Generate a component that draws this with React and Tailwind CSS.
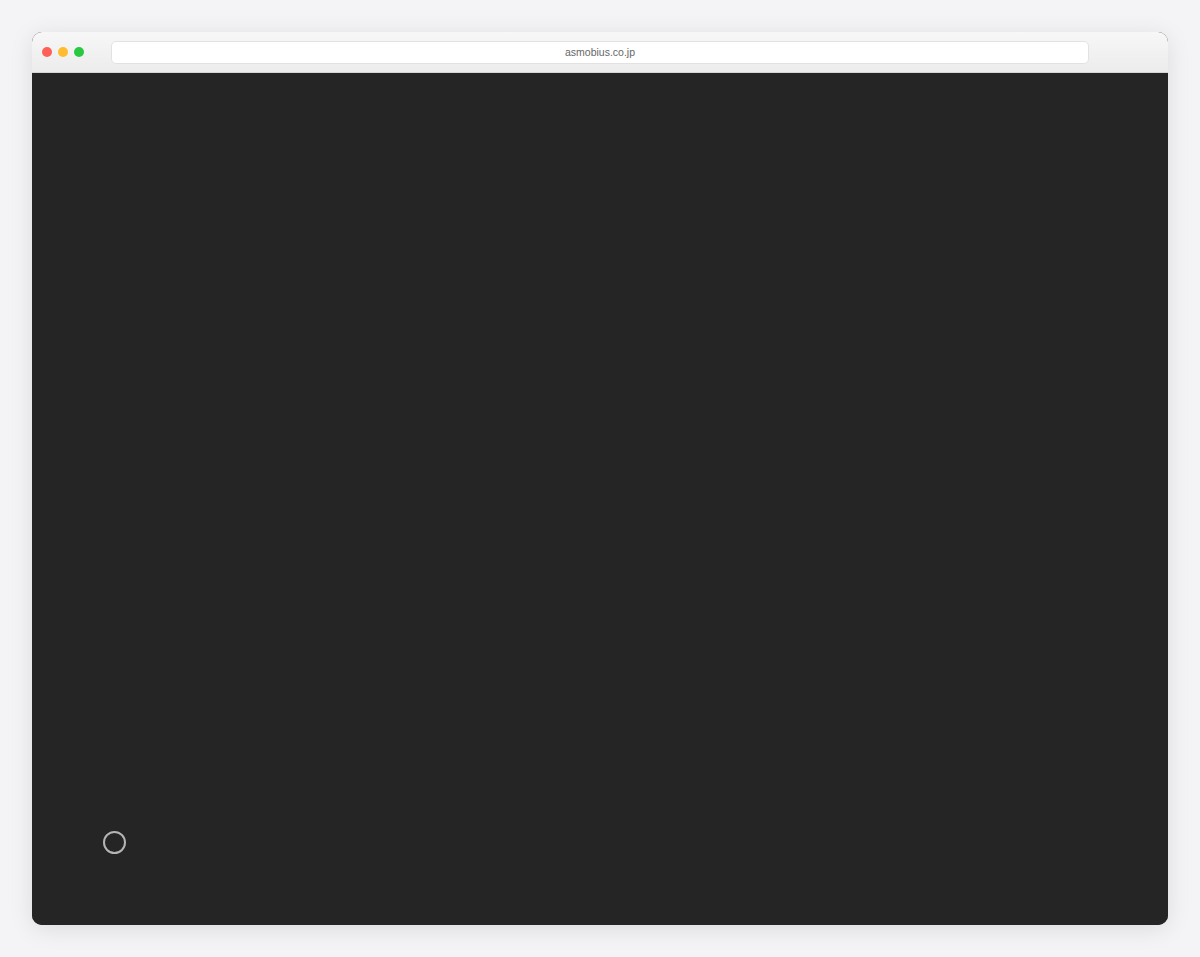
export default function App() {
  return (
    <div className="w-[1200px] h-[957px] bg-[#f4f4f6] p-[32px]" style={{ fontFamily: '"Liberation Sans", Arial, sans-serif' }}>
      <div className="w-[1136px] h-[893px] rounded-[10px] overflow-hidden flex flex-col shadow-[0_4px_24px_rgba(0,0,0,0.10)] bg-[#252525]">
        <div className="h-[41px] shrink-0 bg-gradient-to-b from-[#f7f7f7] to-[#ececec] border-b border-[#d6d6d6] flex items-center pl-[10px] pr-[79px]">
          <div className="flex gap-[6px]">
            <span className="w-[10px] h-[10px] rounded-full bg-[#fe5f57]" />
            <span className="w-[10px] h-[10px] rounded-full bg-[#febc2e]" />
            <span className="w-[10px] h-[10px] rounded-full bg-[#28c840]" />
          </div>
          <div className="ml-[27px] flex-1 h-[23px] bg-white rounded-[5px] border border-[#e2e2e2] flex items-center justify-center pt-[1px] text-[10.5px] text-[#666666]">
            asmobius.co.jp
          </div>
        </div>
        <div className="flex-1 bg-[#252525] flex flex-col justify-end px-[71px] pb-[71px]">
          <div className="w-[23px] h-[23px] rounded-full border-2 border-[#b4b4b4]" />
        </div>
      </div>
    </div>
  );
}
